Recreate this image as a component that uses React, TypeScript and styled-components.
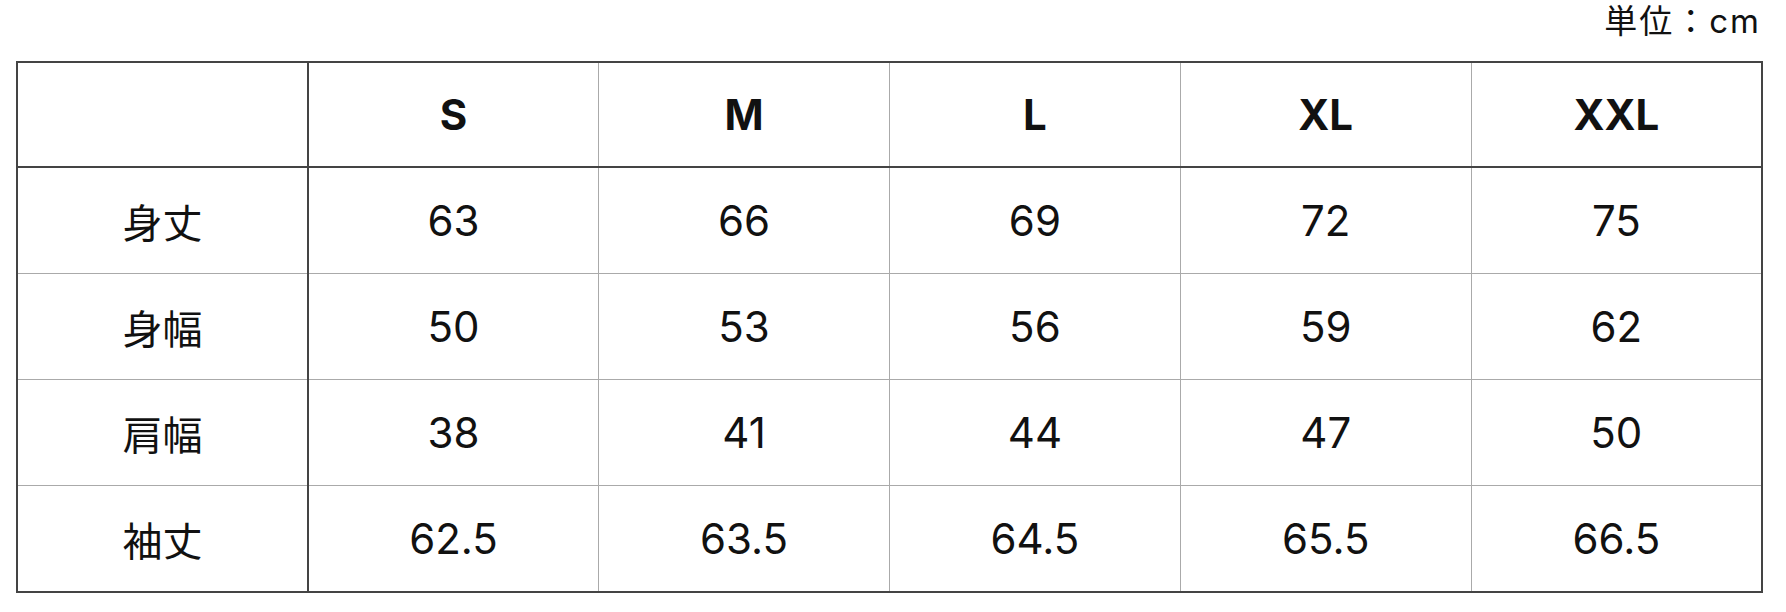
import React from 'react';
import styled, { createGlobalStyle } from 'styled-components';

const GlobalStyle = createGlobalStyle`
  html, body {
    margin: 0;
    padding: 0;
    background: #ffffff;
  }
  body {
    font-family: Inter, "Noto Sans CJK JP", sans-serif;
    color: #111;
  }
`;

const Page = styled.div`
  width: 1747px;
  margin-left: 16px;
`;

const Unit = styled.div`
  text-align: right;
  font-size: 33px;
  line-height: 42px;
  height: 42px;
  letter-spacing: 2px;
  padding-right: 2px;
  margin-bottom: 19px;
`;

const Table = styled.table`
  width: 100%;
  table-layout: fixed;
  border-collapse: collapse;
  border: 2px solid #444;
`;

const HeadCell = styled.th<{ $corner?: boolean }>`
  height: 103px;
  padding: 0;
  font-size: 42px;
  font-weight: 700;
  text-align: center;
  vertical-align: middle;
  border-bottom: 2px solid #444;
  border-left: 1px solid #aaa;
  ${(p) => p.$corner && 'border-right: 2px solid #444;'}
`;

const LabelCell = styled.th`
  height: 105px;
  padding: 0;
  font-size: 40px;
  font-weight: 400;
  text-align: center;
  vertical-align: middle;
  border-top: 1px solid #aaa;
  border-right: 2px solid #444;
`;

const ValueCell = styled.td`
  height: 105px;
  padding: 0;
  font-size: 42px;
  text-align: center;
  vertical-align: middle;
  border-top: 1px solid #aaa;
  border-left: 1px solid #aaa;
`;

const sizes = ['S', 'M', 'L', 'XL', 'XXL'];

const rows: { label: string; values: string[] }[] = [
  { label: '身丈', values: ['63', '66', '69', '72', '75'] },
  { label: '身幅', values: ['50', '53', '56', '59', '62'] },
  { label: '肩幅', values: ['38', '41', '44', '47', '50'] },
  { label: '袖丈', values: ['62.5', '63.5', '64.5', '65.5', '66.5'] },
];

const App: React.FC = () => {
  return (
    <>
      <GlobalStyle />
      <Page>
        <Unit>単位：cm</Unit>
        <Table>
          <thead>
            <tr>
              <HeadCell $corner />
              {sizes.map((s) => (
                <HeadCell key={s}>{s}</HeadCell>
              ))}
            </tr>
          </thead>
          <tbody>
            {rows.map((r) => (
              <tr key={r.label}>
                <LabelCell>{r.label}</LabelCell>
                {r.values.map((v, i) => (
                  <ValueCell key={i}>{v}</ValueCell>
                ))}
              </tr>
            ))}
          </tbody>
        </Table>
      </Page>
    </>
  );
};

export default App;
